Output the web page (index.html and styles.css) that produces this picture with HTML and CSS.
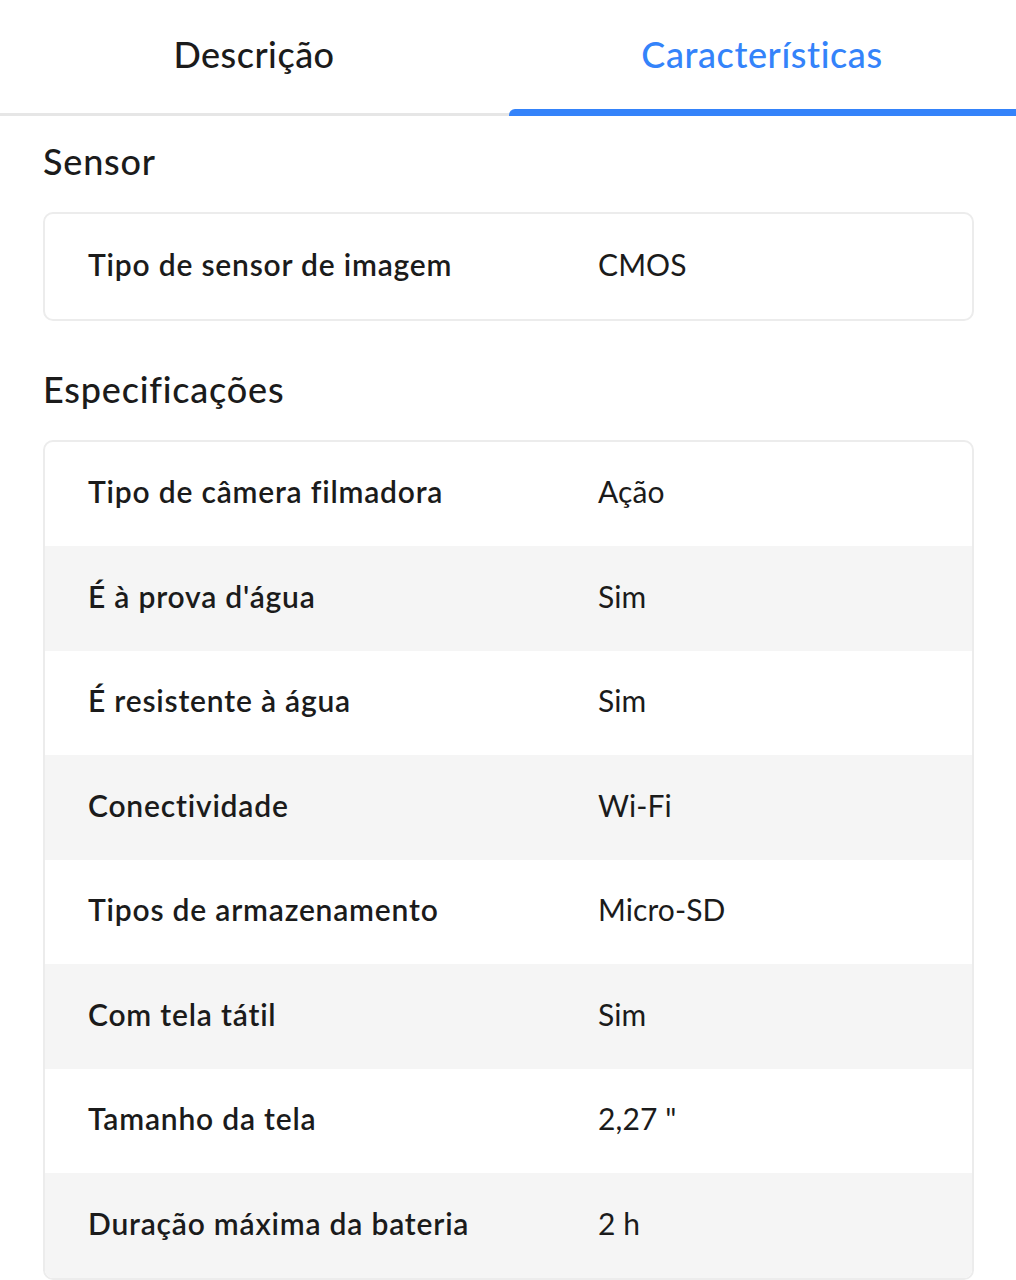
FILE: index.html
```html
<!DOCTYPE html>
<html lang="pt-BR">
<head>
<meta charset="utf-8">
<link rel="stylesheet" href="styles.css">
</head>
<body>
<nav class="tabs">
  <div class="tab">Descrição</div>
  <div class="tab active">Características</div>
</nav>
<main class="content">
  <section class="group">
    <h2 class="group-title">Sensor</h2>
    <div class="card">
      <div class="row"><span class="label">Tipo de sensor de imagem</span><span class="value">CMOS</span></div>
    </div>
  </section>
  <section class="group">
    <h2 class="group-title">Especificações</h2>
    <div class="card">
      <div class="row"><span class="label">Tipo de câmera filmadora</span><span class="value">Ação</span></div>
      <div class="row"><span class="label">É à prova d'água</span><span class="value">Sim</span></div>
      <div class="row"><span class="label">É resistente à água</span><span class="value">Sim</span></div>
      <div class="row"><span class="label">Conectividade</span><span class="value">Wi-Fi</span></div>
      <div class="row"><span class="label">Tipos de armazenamento</span><span class="value">Micro-SD</span></div>
      <div class="row"><span class="label">Com tela tátil</span><span class="value">Sim</span></div>
      <div class="row"><span class="label">Tamanho da tela</span><span class="value">2,27 "</span></div>
      <div class="row"><span class="label">Duração máxima da bateria</span><span class="value">2 h</span></div>
    </div>
  </section>
</main>
</body>
</html>
```
FILE: styles.css
```css
* { box-sizing: border-box; }
html, body { margin: 0; padding: 0; background: #fff; }
body {
  font-family: "Lato", "Noto Sans", "Liberation Sans", sans-serif;
  color: #1b1b1b;
  width: 1016px;
  height: 1280px;
  overflow: hidden;
}
.tabs {
  display: grid;
  grid-template-columns: 1fr 1fr;
  height: 116px;
  border-bottom: 3px solid #e6e6e6;
}
.tab {
  display: flex;
  align-items: center;
  justify-content: center;
  padding-bottom: 6px;
  font-size: 36px;
  font-weight: 500;
  letter-spacing: 0.5px;
  color: #1b1b1b;
  position: relative;
}
.tab.active {
  color: #3483fa;
  letter-spacing: 0.6px;
}
.tab.active::after {
  content: "";
  position: absolute;
  left: 1px;
  right: 0;
  bottom: -3px;
  height: 7px;
  background: #3483fa;
  border-top-left-radius: 6px;
}
.content {
  padding: 0 42px 0 43px;
}
.group-title {
  margin: 0;
  font-size: 36px;
  font-weight: 500;
  letter-spacing: 0.8px;
  height: 96px;
  display: flex;
  align-items: center;
  padding-bottom: 6px;
}
.group + .group .group-title { height: 119px; padding-top: 26px; padding-bottom: 8px; }
.card {
  border: 2px solid #ececec;
  border-radius: 10px;
  overflow: hidden;
}
.row {
  display: flex;
  align-items: center;
  height: 104.5px;
  padding-left: 43px;
  padding-bottom: 5px;
  font-size: 30px;
}
.card .row:nth-child(even) { background: #f5f5f5; }
.label {
  width: 510px;
  font-weight: 600;
  letter-spacing: 0.8px;
}
.value {
  font-weight: 400;
  letter-spacing: 0.1px;
}
```
